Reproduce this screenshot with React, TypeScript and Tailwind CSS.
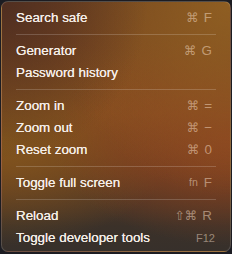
const ITEMS: (
  | { kind: "sep" }
  | { kind: "item"; label: string; keys?: string; mod?: string; small?: boolean; fn?: boolean }
)[] = [
  { kind: "item", label: "Search safe", mod: "⌘", keys: "F" },
  { kind: "sep" },
  { kind: "item", label: "Generator", mod: "⌘", keys: "G" },
  { kind: "item", label: "Password history" },
  { kind: "sep" },
  { kind: "item", label: "Zoom in", mod: "⌘", keys: "=" },
  { kind: "item", label: "Zoom out", mod: "⌘", keys: "−" },
  { kind: "item", label: "Reset zoom", mod: "⌘", keys: "0" },
  { kind: "sep" },
  { kind: "item", label: "Toggle full screen", fn: true, keys: "F" },
  { kind: "sep" },
  { kind: "item", label: "Reload", mod: "⇧⌘", keys: "R" },
  { kind: "item", label: "Toggle developer tools", keys: "F12", small: true },
];

export default function App() {
  return (
    <div className="w-[232px] h-[254px] bg-[#1c1c22] p-[1px] pb-[2px]">
      <div className="h-full w-full rounded-[7px] border border-[#ffffff26] bg-[radial-gradient(ellipse_at_0%_0%,#4f2e21_0%,transparent_45%),radial-gradient(ellipse_at_100%_0%,#8f5e22_0%,transparent_55%),radial-gradient(ellipse_at_100%_55%,#8c4220_0%,transparent_55%),radial-gradient(ellipse_at_0%_55%,#83561d_0%,transparent_55%),linear-gradient(to_bottom,#74451f_0%,#854b20_45%,#6a3d20_65%,#3b3129_90%,#37302b_100%)] pt-[5px] font-['Liberation_Sans',Arial,sans-serif] text-[13.4px] text-[#f5eee8] [text-shadow:0_0_0.4px_#f5eee8]">
        {ITEMS.map((it, i) =>
          it.kind === "sep" ? (
            <div key={i} className="flex h-[11px] items-center px-[14px]">
              <div className="h-px w-full bg-[#ffffff2e]" />
            </div>
          ) : (
            <div key={i} className="flex h-[22px] items-center justify-between pl-[14px] pr-[15px]">
              <span>{it.label}</span>
              {it.keys && (
                <span
                  className={`flex items-center text-[#ffe6d27a] [text-shadow:none] ${it.small ? "text-[11px]" : "pr-[3px]"}`}
                >
                  {it.fn && <span className="mr-[6px] text-[10.5px]">fn</span>}
                  {it.mod && (
                    <span className="mr-[5px] font-['DejaVu_Sans',sans-serif] text-[12.5px]">{it.mod}</span>
                  )}
                  <span>{it.keys}</span>
                </span>
              )}
            </div>
          ),
        )}
      </div>
    </div>
  );
}
